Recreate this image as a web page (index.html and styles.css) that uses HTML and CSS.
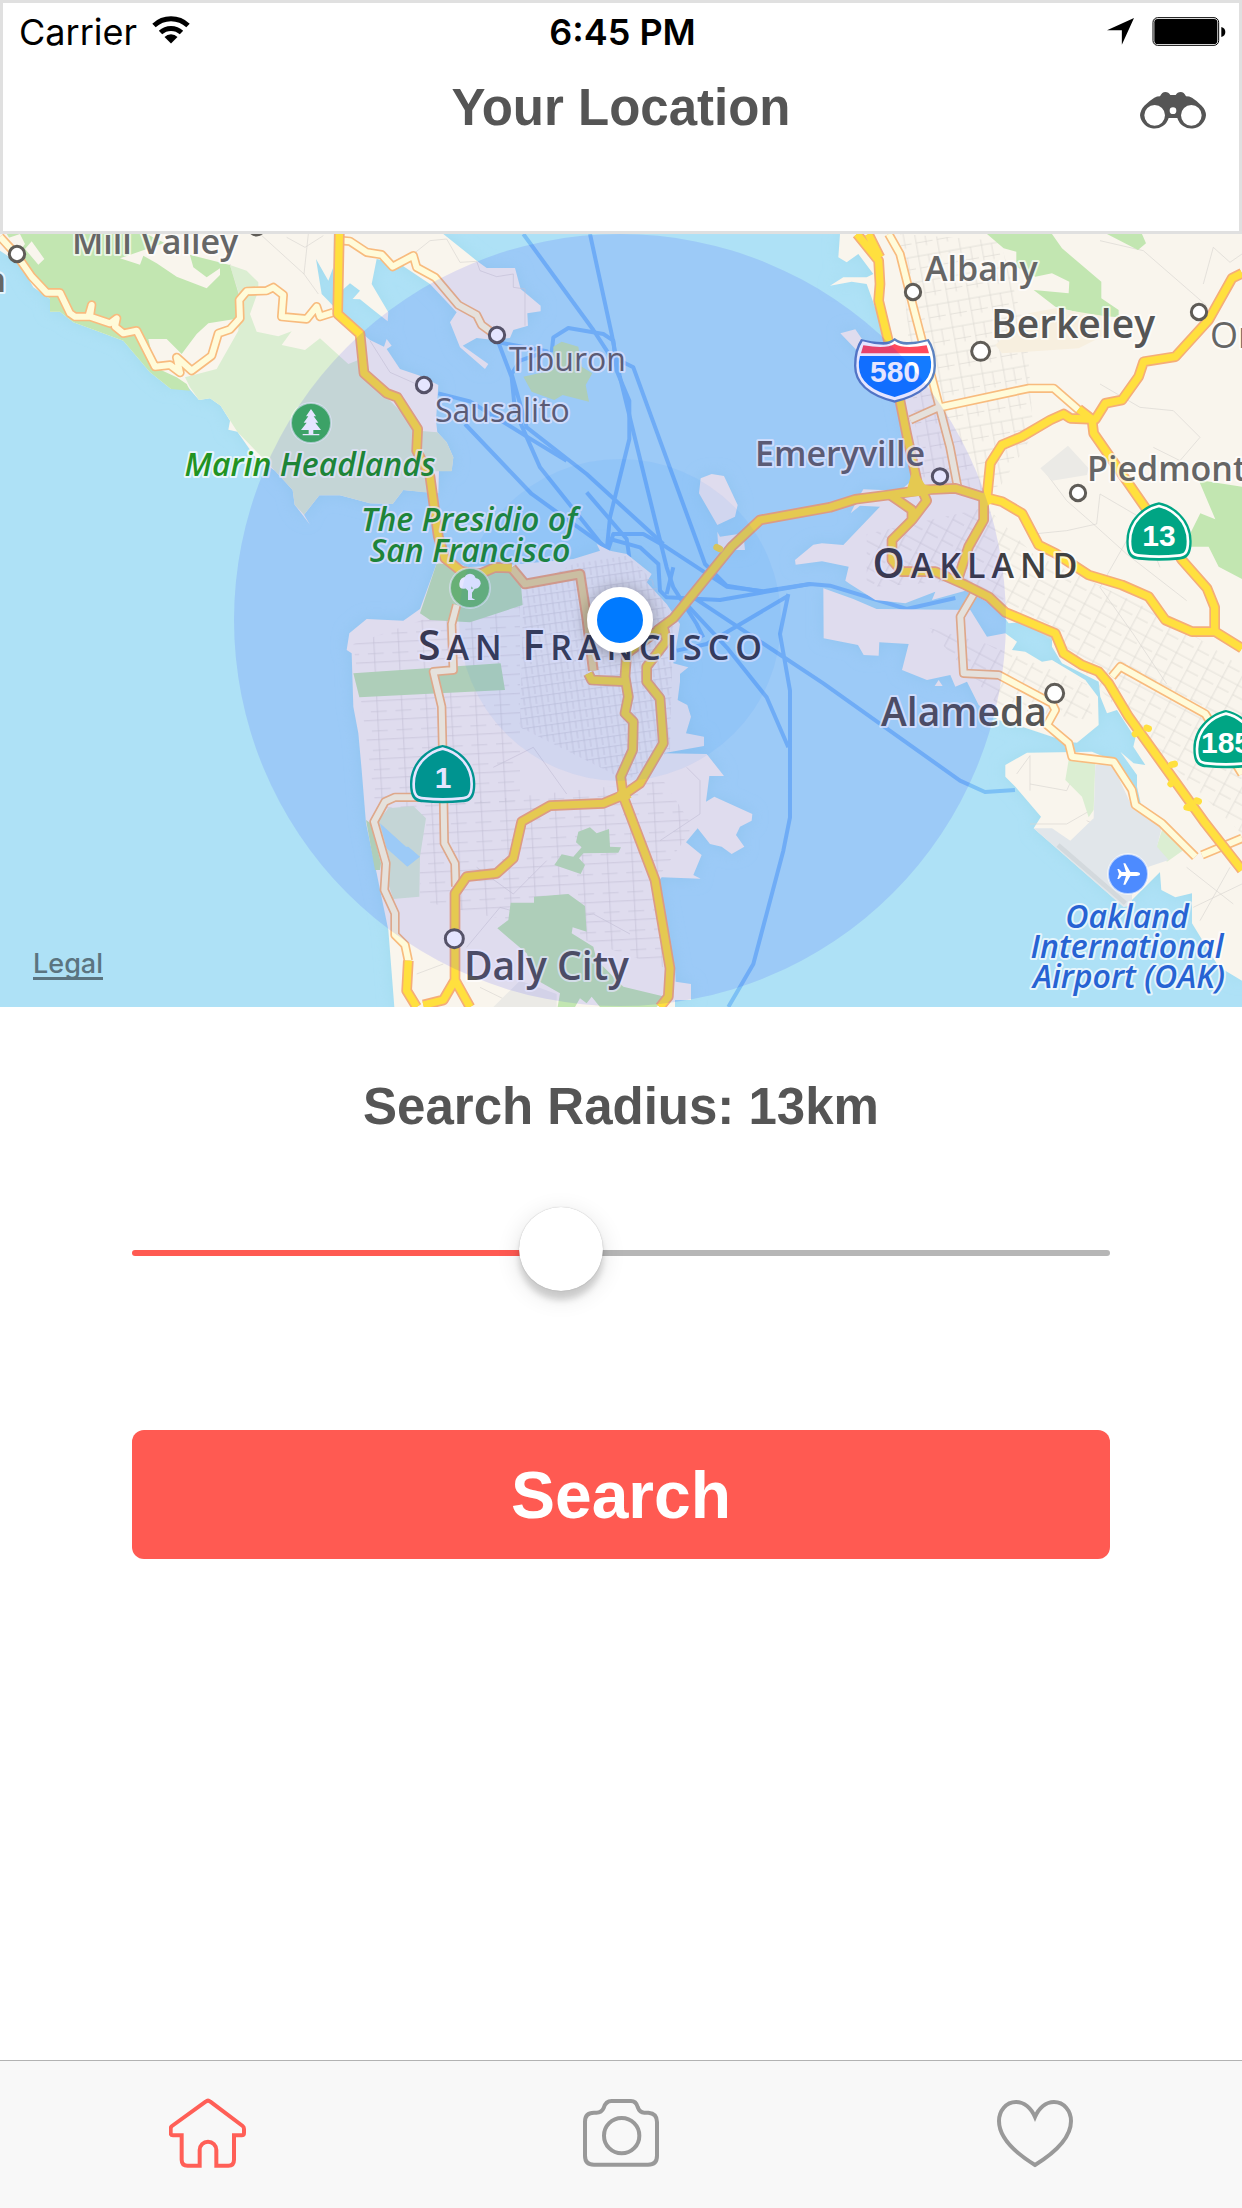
FILE: index.html
```html
<!DOCTYPE html>
<html lang="en">
<head>
<meta charset="utf-8">
<meta name="viewport" content="width=device-width, initial-scale=1">
<title>Your Location</title>
<link rel="stylesheet" href="styles.css">
</head>
<body>
<header class="header">
  <div class="status">
    <div class="status-left">
      <span>Carrier</span>
      <svg class="icon-wifi" viewBox="0 0 38 28" aria-hidden="true">
        <path d="M2 9.500A25 25 0 0 1 36 9.500M8.500 16.500A15.500 15.500 0 0 1 29.500 16.500" fill="none" stroke="#000" stroke-width="5"/>
        <path d="M19 27.500L12.500 21A9 9 0 0 1 25.500 21Z"/>
      </svg>
    </div>
    <span class="status-time">6:45 PM</span>
    <div class="status-right">
      <svg class="icon-arrow" viewBox="22 54 80 80" aria-hidden="true"><path d="M22 90L102 54L66 133V90Z"/></svg>
      <svg class="icon-battery" viewBox="156 48 220 87" aria-hidden="true">
        <rect x="158" y="50" width="197" height="83" rx="14" fill="none" stroke="#000" stroke-width="3"/>
        <rect x="162" y="54" width="189" height="75" rx="10"/>
        <path d="M363 78q12 3 12 15t-12 15z"/>
      </svg>
    </div>
  </div>
  <div class="nav">
    <h1 class="nav-title">Your Location</h1>
    <button class="nav-button" type="button" aria-label="Explore">
      <svg class="icon-binoculars" viewBox="120 276 198 114" aria-hidden="true">
        <path fill="#555" fill-rule="evenodd" d="M120 346Q121 330 133 317Q148 302 163 293Q171 289 180 289Q186 276 196 276Q206 276 211 285H227Q232 276 242 276Q252 276 258 289Q268 289 276 293Q292 303 305 317Q318 330 318 346A44 44 0 0 1 232 354Q219 354 206 354A44 44 0 0 1 120 346ZM133 346a31 31 0 1 0 62 0a31 31 0 1 0-62 0ZM243 346a31 31 0 1 0 62 0a31 31 0 1 0-62 0ZM209 332a10 10 0 1 0 20 0a10 10 0 1 0-20 0Z"/>
      </svg>
    </button>
  </div>
</header>

<main class="main">
  <section class="map" aria-label="Map">
    <svg class="map-canvas" viewBox="0 0 1242 773" preserveAspectRatio="xMidYMid slice">
      <defs>
        <filter id="shore" x="-5%" y="-5%" width="110%" height="110%"><feGaussianBlur stdDeviation="22"/></filter>
        <pattern id="grid" width="74" height="58" patternUnits="userSpaceOnUse" patternTransform="rotate(-3)">
          <path class="street" d="M0 8H74M20 0V58M0 40H48"/>
        </pattern>
        <pattern id="grid-fine" width="36" height="30" patternUnits="userSpaceOnUse" patternTransform="rotate(-8)">
          <path class="street" d="M0 8H36M12 0V30M30 8V30"/>
        </pattern>
        <pattern id="grid-east" width="64" height="76" patternUnits="userSpaceOnUse" patternTransform="rotate(-10)">
          <path class="street" d="M0 12H64M14 0V76M44 12V60M14 48H64"/>
        </pattern>
        <pattern id="grid-port" width="52" height="70" patternUnits="userSpaceOnUse" patternTransform="rotate(28)">
          <path class="street" d="M0 12H52M14 0V70M14 44H52"/>
        </pattern>
        <g id="land">
          <path d="M0 0V50L60 90L100 160L150 195V233H180L220 265L370 320L450 415L513 465L530 440L560 455L597 498L630 493L662 515L690 560L685 587L712 593L765 668L825 710L878 768L884 812L930 872L912 842L958 784H1020L1110 808L1178 810L1210 768L1315 778L1317 710H1355L1360 670L1340 625L1312 595L1308 560L1315 453L1260 425L1200 405L1160 345L1175 335L1160 315L1152 338L1110 318L1030 250L985 200L965 180L948 75L985 140L1000 100V0Z"/>
          <path d="M1000 0H1330L1430 80L1460 102H1545L1562 165L1622 215V232L1582 238L1584 275L1540 288L1530 312L1480 318L1430 312L1388 335L1465 390L1455 405L1380 340L1350 265L1370 235L1290 150L1200 90L1130 75L1115 150L1165 235L1163 262L1120 228L1080 196L1058 195L1080 170L1050 148L1025 170V250H1000Z"/>
          <path d="M1040 1248L1048 1198L1100 1155L1210 1160L1260 1125L1310 988L1330 965L1400 1000L1560 990L1720 975L1800 950L1790 930L1830 950L1880 960L1955 1020L1940 1045L2000 1110L2040 1170L2020 1288L2065 1300L2040 1320V1343L2033 1398L2062 1413L2073 1448L2058 1498L2112 1508V1536L1990 1558L2120 1560L2172 1626H2128L2118 1703L2143 1688L2257 1740L2255 1760L2220 1778L2208 1803L2233 1838L2195 1860L2165 1838L2130 1830L2093 1783L2058 1825L2105 1863L2080 1923L2102 1934L1985 1930L1975 1943L2025 2203L2027 2243L2073 2250V2298H2025V2319H1183L1165 2088L1130 1918L1098 1768L1085 1608L1075 1498L1060 1418L1055 1258Z"/>
          <path d="M2520 0L2515 70L2540 85L2575 60L2620 120L2600 130L2530 130L2490 155L2555 143L2600 150L2640 260L2665 350L2700 500L2720 600L2735 740L2700 770L2590 766L2570 800L2552 838L2580 815L2640 818L2530 933L2466 928L2440 932L2385 978L2387 992L2466 982L2546 998L2536 1040L2550 1050L2626 1098L2716 1108L2806 1073L2796 1098L2896 1070L2990 1118L3026 1168L3086 1163L3156 1203V1238L3186 1288L3296 1343L3301 1388L3321 1438L3351 1428L3406 1513L3400 1538L3436 1593L3401 1588L3361 1553L3411 1623V1658L3421 1703L3441 1900L3511 1878L3479 1903L3484 1968L3526 1990L3576 1978V2068L3656 2198L3726 2240V0Z"/>
          <path d="M2470 1063L2560 1095L2630 1125L2911 1128L2961 1208L3016 1198L3051 1223L3036 1248L3076 1253L3126 1283L3156 1278L3256 1338L3294 1388L3296 1473L3231 1526L3201 1523L3066 1478L2996 1458L2936 1413L2901 1343L2866 1358L2851 1323L2781 1338L2706 1308L2726 1230L2638 1225L2636 1265L2591 1263L2574 1233L2471 1213Z"/>
          <path d="M3016 1593L3081 1556L3276 1553L3336 1578L3396 1688L3486 1768L3576 1868L3511 1883L3396 1998L3371 2018L3101 1783L3123 1748L3046 1658L3016 1628Z"/>
          <path d="M2102 733L2135 720L2172 726L2213 813L2205 848L2152 873L2097 778ZM2152 893L2160 908L2230 898L2235 948L2155 948Z"/>
          <path d="M2521 298L2566 286L2610 350L2590 370ZM2804 1356L2816 1338L2828 1356Z"/>
        </g>
        <g id="minor">
          <path d="M0 8L50 63L95 128L140 176H180L210 238L225 248L265 248L275 213L270 248L330 268L350 253L345 278L370 298L410 290L465 398L510 393L540 416L530 370L575 410L635 365L655 298L690 286L720 253L718 198L740 172L800 170L820 160L850 183L845 248L920 255L950 218L960 248L1000 235"/>
          <path d="M1005 18L1050 22L1100 55L1145 62L1178 98L1240 65L1250 100L1305 130L1375 213L1430 243L1445 273L1475 295"/>
          <path d="M2666 0L2700 60L2740 220L2850 640L2875 770M2731 558L2811 522L3086 463H3161L3236 528"/>
          <path d="M2930 1065L2881 1148L2891 1318L2996 1323L3156 1408L3166 1428L3141 1473L3206 1528L3216 1568L3341 1583L3396 1668L3406 1713L3486 1768L3586 1868M3606 1863L3666 1838L3726 1813M3336 1328L3361 1298L3616 1440L3726 1620"/>
          <path d="M1370 1113L1355 1170L1360 1308L1300 1313L1325 1418L1328 1548L1333 1828L1365 1888L1367 1958M1300 1690H1185L1155 1703L1122 1763L1158 1888L1153 1968L1185 2038V2103L1215 2133L1225 2180"/>
        </g>
        <g id="major">
          <path d="M1018 0L1013 240L1080 300L1092 418L1160 478L1192 490L1253 585L1250 650L1290 728L1315 908L1335 973L1385 1013L1440 1020L1485 1000L1535 1002"/>
          <path d="M2571 0L2636 80L2640 150L2636 200L2665 320L2700 500L2720 600L2755 760M2605 0L2640 70"/>
          <path d="M1970 1190L2020 1153L2195 938L2280 858L2490 820L2566 796L2666 783L2766 768L2866 763L2946 788L3006 803L3066 838L3116 933L3166 958L3266 1023L3366 1053L3446 1088L3496 1158L3576 1193H3646L3726 1243"/>
          <path d="M2961 788L2971 688L3006 633L3066 608L3151 558L3191 540L3211 553L3286 556L3316 508L3366 498L3416 428L3431 383L3526 368L3626 258L3696 133L3726 118"/>
          <path d="M3236 525L3276 556L3281 598L3441 828L3546 978L3621 1063L3644 1120V1190M2951 788V858L2906 938L2876 1028"/>
          <path d="M2671 783L2736 828V858L2676 918V978L2706 1013H2806L2896 1053L2966 1088L3016 1135L3166 1198L3191 1258L3246 1293L3296 1313L3326 1348L3386 1448L3616 1768L3726 1908M2766 768L2780 800L2736 858"/>
          <path d="M1225 2180L1220 2270L1250 2319M1990 1178L1880 1258L1875 1328L1885 1388L1875 1438L1900 1463L1898 1548L1862 1628L1870 1688L1965 1938L2010 2203L2005 2288L1980 2319"/>
          <path d="M1990 1178L2000 1220L1940 1298V1343L1980 1393L1990 1528L1920 1648L1870 1683L1810 1708L1650 1715L1565 1763L1540 1873L1490 1918L1400 1928L1365 1978V2238L1330 2298L1270 2313M1365 2238L1410 2319M1875 1343L1775 1338L1765 1318"/>
        </g>
        <g id="state-shield">
          <path fill="#00a584" d="M0-87C40-80 98-40 98 30C98 74 82 84 60 85Q0 91-60 85C-82 84-98 74-98 30C-98-40-40-80 0-87Z"/>
          <path fill="none" stroke="#fff" stroke-width="8" d="M0-76C36-68 87-34 87 30C87 66 76 72 56 73Q0 79-56 73C-76 72-87 66-87 30C-87-34-36-68 0-76Z"/>
        </g>
      </defs>

      <g transform="scale(.33333)">
        <rect class="water" width="3726" height="2319"/>
        <use href="#land" class="shallow" filter="url(#shore)"/>
        <g class="ferry">
          <path d="M1570 0L1780 288L1830 365L1900 400L2115 990L2180 1055L2290 1073M1770 0L1835 300L1860 430L2000 1000L2020 1060L2090 1170L2110 1210"/>
          <path d="M1495 325L1535 430L1545 530L1620 700L1820 950L1830 850L1888 615V500L1850 410L1840 320L1810 300L1705 282L1660 310L1655 355M1495 325L1640 352L1560 380L1535 420L1580 580L1760 720L1990 930"/>
          <path d="M1315 478L1410 502L1600 620L1700 680M1395 570L1595 780L1825 945L1840 900H1930L2000 940L2180 1058L2290 1072L2430 1050L2490 1055L2720 1125L2866 1092M1760 775L1880 915L1888 970"/>
          <path d="M1830 915L1920 940L1975 990L1980 1070L2000 1090L2160 1098L2430 1050M2000 1080L2020 1000M2040 1090L2180 1240L2300 1390L2365 1540M2365 1080L2340 1200L2370 1370V1750L2350 1850L2260 2190L2185 2319M2030 1250L2120 1230L2365 1085M2080 1090L2470 1348L2880 1640L2955 1674L3045 1668"/>
        </g>
        <use href="#land" class="earth"/>

        <path fill="url(#grid)" d="M1060 1230L1260 1160L1560 1040V1700L1260 1720L1130 1740Z"/>
        <path fill="url(#grid)" d="M1260 1720L1990 1640L2080 1780L1975 1930L1990 2200L1700 2100L1260 2000Z"/>
        <path fill="url(#grid-fine)" d="M1570 1070L1720 990L1880 965L1960 1040L2020 1170L2010 1550L1880 1640L1560 1480Z"/>
        <path fill="url(#grid-east)" d="M2700 0L3000 20L3080 300L3100 600L2980 790L2760 740Z"/>
        <path fill="url(#grid-port)" d="M2600 900L2960 820L3100 960L3500 1150L3726 1300V1800L3400 1480L3200 1250L2880 1040L2600 1060Z"/>
        <path fill="url(#grid-port)" d="M2780 1180L2960 1230L3260 1350L3280 1460L3000 1420Z"/>
        <g class="street">
          <path d="M690 90L718 190M780 0L912 120L955 180M925 0L912 120M860 10L915 40L970 5M1110 320L1170 415L1260 455M1240 60L1290 20L1340 15L1380 85L1430 82L1440 110L1490 128L1540 120V160L1575 165V275"/>
          <path d="M3300 20L3430 50L3620 215M3610 150L3640 40L3690 85L3726 60M3300 450L3420 520L3520 530L3600 610L3540 680L3460 640M3100 900L3200 890L3290 870L3300 780L3420 850L3480 1000M3140 720L3200 800L3280 870L3380 960L3560 1100M3380 920L3300 1060L3400 1200L3500 1350"/>
          <path d="M3050 1620L3090 1565V1670M3090 1650L3200 1670L3250 1560M3090 1770H3200L3270 1730M3260 1760L3440 1840M3560 1900L3700 2010M3580 2020L3726 1950M3600 2060L3690 1900"/>
          <path d="M1400 2140L1500 2020L1640 2060L1780 2040L1890 2100M1430 1900L1540 1980L1640 1880M1480 1600L1600 1540L1700 1680M2060 1600L2100 1640V1740L1980 1820M1250 2220L1330 2190M1440 2260L1560 2319"/>
        </g>

        <g class="park">
          <path d="M20 0H440L560 60L690 93L715 178L720 253L625 268L590 300L545 360L500 315H445L465 400L530 430L560 450L570 470L513 465L450 415L370 320L220 265L180 233H150V195L100 150L60 60Z"/>
          <path d="M2961 0H3156L3186 43L3304 143V193L3356 228V250L3266 243L3166 218L3101 168L3206 178L3208 143L3156 118L3106 128L3049 98V53L3011 43ZM3321 0H3426L3438 28L3414 48ZM3596 738L3726 758V1035L3656 998L3626 938H3551L3601 838L3646 856Z"/>
          <path d="M1310 988L1360 993L1560 1018L1568 1113L1410 1165L1290 1158L1260 1138ZM1060 1318L1502 1288L1515 1368L1078 1390ZM1098 1758L1112 1768L1143 1888L1140 1908H1125Z"/>
          <path d="M1735 1793L1770 1780L1790 1798L1827 1785L1830 1838L1863 1840L1855 1856L1750 1858L1737 1873L1755 1893L1742 1920L1663 1893L1685 1861L1720 1868L1745 1840L1728 1825Z"/>
          <path d="M1492 2083L1525 2058L1532 2006H1602V1988L1705 1980L1755 2016L1760 2093L1718 2080L1715 2098L1780 2138L1790 2178L1870 2258L1995 2288L1970 2319H1800L1775 2288L1760 2308L1740 2293L1725 2319H1673L1680 2278L1610 2238L1580 2158Z"/>
          <path d="M1660 338L1685 323L1735 338L1745 398L1777 418L1757 453L1767 503L1688 483L1663 498L1595 473L1570 428L1660 408Z"/>
        </g>
        <g class="park-pale">
          <path d="M690 93L740 110L775 145V170L750 240L770 293L835 307L875 292L845 333L915 348L960 313L1045 390L1075 378L1085 418L1150 480L1200 530L1245 590L1240 650L1290 728L1300 778L1210 768L1178 810L1110 808L1020 784H958L912 842L884 812L878 768L825 710L712 593L662 515L630 493L597 498L570 460L555 430L650 405L715 290L720 190Z"/>
          <path d="M1312 595L1340 625L1360 670L1355 712H1290L1250 650L1255 590ZM1165 1723L1240 1716L1278 1753L1260 1868L1258 1988L1180 1995L1165 1950L1170 1880L1135 1760ZM3206 1578L3286 1588L3281 1728L3266 1750L3246 1688L3196 1638ZM3486 1788L3551 1848L3501 1883L3469 1840Z"/>
        </g>
        <path class="earth" d="M360 73L490 28H560L580 100L620 130L660 103V123L620 163L530 128L470 88L430 65L420 92ZM0 20L60 0L75 30L60 50ZM75 45L95 22L133 75L115 92Z"/>
        <path class="water" d="M1140 1768L1218 1838H1225L1260 1868L1222 1898L1160 1843Z"/>
        <path fill="#f7efdf" d="M2986 333L3086 238L3166 223L3326 248V298L3236 343L3006 358Z"/>
        <path fill="#ebeae6" d="M3121 703L3204 635L3266 703L3261 723L3156 740ZM1560 2240L1670 2280V2319H1480Z"/>
        <path fill="#e1e6ea" d="M3286 1593L3336 1588L3396 1718L3486 1778L3471 1838L3506 1878L3446 1898L3396 1983V2013L3371 2020L3101 1783L3156 1783L3211 1820L3281 1753Z"/>
        <path d="M3174 1833L3376 2008" stroke="#d3d9dd" stroke-width="14"/>

        <use href="#minor" class="minor-casing"/>
        <use href="#minor" class="minor-fill"/>
        <use href="#major" class="major-casing"/>
        <path class="major-casing" d="M1535 1002L1575 1050L1740 1020L1760 1150L1780 1310"/>
        <path fill="none" stroke="#f0da92" stroke-width="20" stroke-linejoin="round" d="M1535 1002L1575 1050L1740 1020L1760 1150L1780 1310"/>
        <use href="#major" class="major-fill"/>
        <path fill="#ffe03e" d="M2740 700L2775 752L2830 765L2770 785L2670 792L2720 770ZM2935 782L2965 778L2980 805L2950 822ZM1840 1690L1866 1660L1895 1690L1870 1705Z"/>
        <path d="M2150 940L2160 945M3405 1500L3412 1494M3440 1482L3446 1484M3514 1592L3524 1590M3512 1650L3520 1640M3560 1720L3570 1722M3590 1700L3596 1702" stroke="#ffe03e" stroke-width="20" stroke-linecap="round"/>

        <g class="town">
          <circle cx="51" cy="60" r="23"/><circle cx="770" cy="-20" r="23"/><circle cx="1491" cy="303" r="23"/><circle cx="1272" cy="453" r="23"/>
          <circle cx="2739" cy="174" r="23"/><circle cx="2942" cy="352" r="27"/><circle cx="3597" cy="234" r="23"/><circle cx="2820" cy="727" r="23"/>
          <circle cx="3234" cy="777" r="23"/><circle cx="3164" cy="1378" r="27"/><circle cx="1363" cy="2114" r="27"/>
        </g>

        <g stroke="#fff" stroke-opacity=".6" stroke-width="6">
          <circle cx="933" cy="567" r="60" fill="#43b556"/>
          <circle cx="1410" cy="1062" r="60" fill="#74c467"/>
          <circle cx="3384" cy="1920" r="60" fill="#4d8bff"/>
        </g>
        <g fill="#fff">
          <path d="M933 525L948 547H941L955 566H946L963 588H940V600H958V604H908V600H926V588H903L920 566H911L925 547H918Z"/>
          <path d="M1404 1098V1070L1390 1056L1404 1060V1050H1414V1066L1430 1056L1416 1076V1092L1426 1098H1396Z"/>
          <circle cx="1396" cy="1046" r="17"/><circle cx="1410" cy="1036" r="17"/><circle cx="1426" cy="1048" r="16"/><circle cx="1390" cy="1052" r="12"/>
          <path d="M3420 1920C3420 1914 3410 1914 3400 1914H3391L3376 1888H3370L3378 1914H3365L3357 1905H3352L3357 1920L3352 1935H3357L3365 1926H3378L3370 1952H3376L3391 1926H3400C3410 1926 3420 1926 3420 1920Z"/>
        </g>

        <path fill="#5b82c0" d="M2583 315Q2620 325 2650 324Q2670 324 2684 312Q2700 324 2720 324Q2750 325 2786 315Q2808 345 2808 395Q2808 475 2684 506Q2562 475 2562 395Q2562 345 2583 315Z"/>
        <path fill="#fff" d="M2588 322Q2620 332 2650 332Q2670 332 2684 320Q2700 332 2720 332Q2750 332 2782 322Q2801 350 2801 395Q2801 470 2684 499Q2569 470 2569 395Q2569 350 2588 322Z"/>
        <path fill="#ff4a5c" d="M2590 334Q2660 345 2684 330Q2710 345 2780 334L2787 358H2583Z"/>
        <path fill="#147bff" d="M2580 366H2790Q2795 385 2793 400Q2788 462 2684 489Q2580 462 2577 400Q2575 385 2580 366Z"/>
        <use href="#state-shield" x="3477" y="892"/>
        <use href="#state-shield" x="1328" y="1620"/>
        <use href="#state-shield" x="3678" y="1515"/>
      </g>

      <g class="shield-text">
        <text x="895" y="148">580</text>
        <text x="1159" y="312">13</text>
        <text x="443" y="554">1</text>
        <text x="1226" y="519">185</text>
      </g>
      <g class="label">
        <text x="72" y="20">Mill Valley</text>
        <text x="6" y="58" text-anchor="end">n</text>
        <text x="755" y="232">Emeryville</text>
        <text x="925" y="47">Albany</text>
        <text x="1087" y="247">Piedmont</text>
      </g>
      <g class="label label-light">
        <text x="509" y="137">Tiburon</text>
        <text x="435" y="188">Sausalito</text>
        <text class="label-wide" x="1210" y="114">Orinda</text>
      </g>
      <g class="label label-town">
        <text x="991" y="104">Berkeley</text>
        <text x="881" y="492">Alameda</text>
        <text x="464" y="746">Daly City</text>
      </g>
      <g class="label label-city">
        <text x="593" y="426" text-anchor="middle">S<tspan class="cap-small">AN </tspan>F<tspan class="cap-small">RANCISCO</tspan></text>
        <text x="978" y="344" text-anchor="middle">O<tspan class="cap-small">AKLAND</tspan></text>
      </g>
      <g class="label label-park" text-anchor="middle">
        <text x="310" y="242">Marin Headlands</text>
        <text x="469" y="297">The Presidio of</text>
        <text x="470" y="328">San Francisco</text>
      </g>
      <g class="label label-airport" text-anchor="middle">
        <text x="1127" y="694">Oakland</text>
        <text x="1127" y="724">International</text>
        <text x="1129" y="754">Airport (OAK)</text>
      </g>

      <circle cx="620" cy="386" r="386" fill="#00f" fill-opacity=".1"/>
      <circle cx="620" cy="386" r="161" fill="#007aff" fill-opacity=".06"/>
      <circle class="pin" cx="620" cy="386" r="28"/>
    </svg>
    <a class="map-legal" href="#legal">Legal</a>
  </section>

  <form class="search">
    <label class="search-label" for="radius">Search Radius: 13km</label>
    <input class="search-range" id="radius" type="range" min="0" max="30" value="13">
    <button class="search-button" type="button">Search</button>
  </form>
</main>

<nav class="tabs" aria-label="Main">
  <a class="tab tab-active" href="#home" aria-label="Home">
    <svg class="icon-tab" viewBox="27 37 231 210" stroke-width="12"><path d="M137 48L36 121Q32 124 32 130V142Q32 149 39 149H65V222Q65 240 83 240H119V193a25 25 0 0 1 50 0V240H205Q222 240 222 222V149H245Q252 149 252 142V130q0-6-4-9L151 48q-7-6-14 0z"/></svg>
  </a>
  <a class="tab" href="#camera" aria-label="Camera">
    <svg class="icon-tab" viewBox="36 39 231 210" stroke-width="12"><path d="M69 83H76q16 0 22-14q6-21 24-21H180q15 0 20 18q6 17 20 17h12q26 2 26 28V212q0 27-27 27H69q-27 0-27-27V110q0-27 27-27z"/><circle cx="152" cy="152" r="53"/></svg>
  </a>
  <a class="tab" href="#favourites" aria-label="Favourites">
    <svg class="icon-tab" viewBox="996 2098 77 70" stroke-width="4"><path d="M1034 2117C1030 2108 1023 2102 1015 2102C1005 2102 998 2111 998 2121C998 2138 1013 2152 1034 2165C1055 2152 1070 2138 1070 2121C1070 2111 1063 2102 1053 2102C1045 2102 1038 2108 1034 2117z"/></svg>
  </a>
</nav>
</body>
</html>
```
FILE: styles.css
```css
* {
  box-sizing: border-box;
}

body {
  margin: 0;
  min-height: 100vh;
  display: flex;
  flex-direction: column;
  background: #fff;
  color: #555;
  font-family: "Liberation Sans", Arial, sans-serif;
}

/* Status bar and title */
.header {
  border: 3px solid #e0e0e0;
  padding-bottom: 75px;
}

.status {
  display: grid;
  grid-template-columns: 1fr auto 1fr;
  align-items: center;
  height: 57px;
  padding: 0 13px 0 16px;
  color: #000;
  font: 400 36px/44px Inter, sans-serif;
}

.status-left,
.status-right {
  display: flex;
  align-items: center;
  gap: 15px;
}

.status-right {
  justify-content: flex-end;
  gap: 18px;
}

.status-time {
  font-weight: 600;
}

.icon-wifi {
  width: 38px;
  height: 28px;
  margin-bottom: 3px;
}

.icon-arrow {
  width: 27px;
  height: 27px;
}

.icon-battery {
  width: 74px;
  height: 29px;
}

.nav {
  display: grid;
  grid-template-columns: 1fr auto 1fr;
  align-items: center;
  height: 96px;
  padding: 0 33px;
}

.nav-title {
  grid-column: 2;
  margin: 0;
  font-size: 51px;
  line-height: 60px;
}

.nav-button {
  justify-self: end;
  display: flex;
  padding: 6px 0 0;
  border: 0;
  background: none;
}

.icon-binoculars {
  width: 66px;
  height: 38px;
}

.main {
  flex: 1;
}

/* Map */
.map {
  position: relative;
  aspect-ratio: 1242 / 773;
  overflow: hidden;
}

.map-canvas {
  display: block;
  width: 100%;
  height: 100%;
}

.water {
  fill: #aee1f6;
}

.shallow {
  fill: #a3dcee;
}

.earth {
  fill: #f9f5ed;
}

.park {
  fill: #c2e6b1;
}

.park-pale {
  fill: #dbeed2;
}

.street {
  fill: none;
  stroke: #dad7d1;
  stroke-width: 2;
}

.ferry {
  fill: none;
  stroke: #7cc0f5;
  stroke-width: 12;
  stroke-linejoin: round;
}

.minor-casing,
.minor-fill,
.major-casing,
.major-fill {
  fill: none;
  stroke-linejoin: round;
}

.minor-casing {
  stroke: #f8bb7e;
  stroke-width: 28;
}

.minor-fill {
  stroke: #fffbd9;
  stroke-width: 18;
}

.major-casing {
  stroke: #f5ad78;
  stroke-width: 32;
}

.major-fill {
  stroke: #ffe03e;
  stroke-width: 22;
}

.town {
  fill: #fff;
  stroke: #5f5c57;
  stroke-width: 9;
}

.label {
  fill: #666;
  stroke: rgba(255, 255, 255, .7);
  stroke-width: 4px;
  stroke-linejoin: round;
  paint-order: stroke;
  font: 600 34px "Open Sans", "Noto Sans", sans-serif;
}

.label-light {
  font-size: 32px;
  font-weight: 500;
}

.label-wide {
  font-size: 36px;
}

.label-town {
  fill: #555;
  font-size: 39px;
}

.label-city {
  fill: #404040;
  font-size: 41px;
  letter-spacing: 6px;
}

.cap-small {
  font-size: 34px;
}

.label-park {
  fill: #229322;
  font-size: 32px;
  font-style: italic;
}

.label-airport {
  fill: #2763d3;
  font-size: 32px;
  font-style: italic;
}

.shield-text {
  fill: #fff;
  font: 700 30px "Liberation Sans", Arial, sans-serif;
  text-anchor: middle;
}

.pin {
  fill: #007aff;
  stroke: #fff;
  stroke-width: 10px;
  filter: drop-shadow(0 2px 8px rgba(0, 0, 0, .35));
}

.map-legal {
  position: absolute;
  left: 33px;
  bottom: 26px;
  color: #5b7480;
  font: 500 27px/34px Inter, sans-serif;
  text-underline-offset: 4px;
  text-decoration-thickness: 3px;
  text-decoration-skip-ink: none;
}

/* Search form */
.search {
  display: flex;
  flex-direction: column;
  padding: 70px 132px;
}

.search-label {
  font-size: 51px;
  font-weight: 700;
  line-height: 60px;
  text-align: center;
}

.search-range {
  -webkit-appearance: none;
  appearance: none;
  width: 100%;
  height: 86px;
  margin: 73px 0 134px;
  background: none;
}

.search-range::-webkit-slider-runnable-track {
  height: 6px;
  border-radius: 3px;
  background: linear-gradient(to right, #ff5a52 44%, #b6b6b6 44%);
}

.search-range::-webkit-slider-thumb {
  -webkit-appearance: none;
  width: 84px;
  height: 84px;
  margin-top: -43px;
  border-radius: 50%;
  background: #fff;
  box-shadow: 0 0 1px rgba(0, 0, 0, .3), 0 9px 6px rgba(0, 0, 0, .15), 0 6px 24px rgba(0, 0, 0, .12);
}

.search-button {
  padding: 29px 28px 27px;
  border: 0;
  border-radius: 12px;
  background: #ff5a52;
  color: #fff;
  font: 700 66px/73px "Liberation Sans", Arial, sans-serif;
}

/* Tab bar */
.tabs {
  display: grid;
  grid-template-columns: repeat(3, 1fr);
  height: 148px;
  padding-bottom: 4px;
  border-top: 1px solid #b2b2b2;
  background: #f8f8f8;
}

.tab {
  display: flex;
  align-items: center;
  justify-content: center;
  color: #999;
}

.tab-active {
  color: #ff5f57;
}

.icon-tab {
  width: 77px;
  height: 70px;
  fill: none;
  stroke: currentColor;
}
```
